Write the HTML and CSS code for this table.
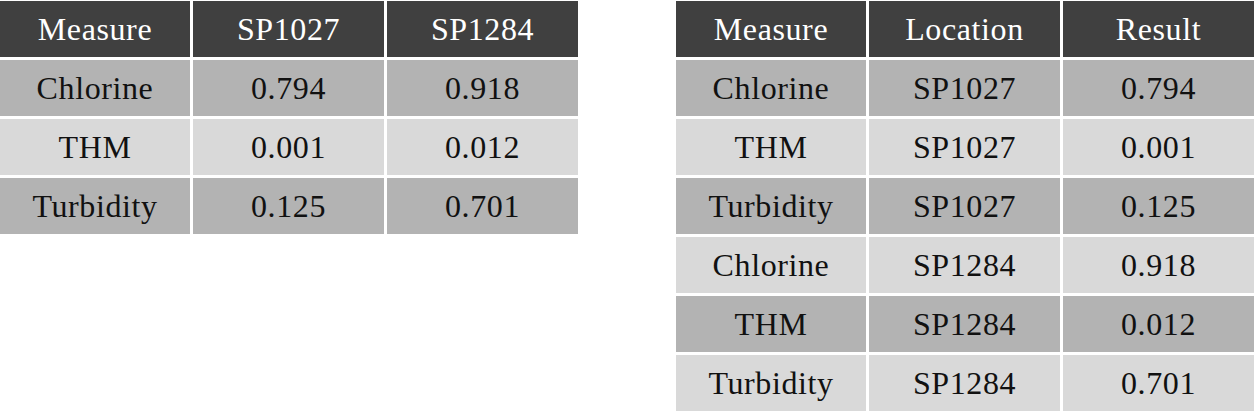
FILE: index.html
```html
<!DOCTYPE html>
<html>
<head>
<meta charset="utf-8">
<link rel="stylesheet" href="styles.css">
</head>
<body>
<div class="page">
  <div class="table" role="table">
    <div class="cell head">Measure</div>
    <div class="cell head">SP1027</div>
    <div class="cell head">SP1284</div>

    <div class="cell dark">Chlorine</div>
    <div class="cell dark">0.794</div>
    <div class="cell dark">0.918</div>

    <div class="cell light">THM</div>
    <div class="cell light">0.001</div>
    <div class="cell light">0.012</div>

    <div class="cell dark">Turbidity</div>
    <div class="cell dark">0.125</div>
    <div class="cell dark">0.701</div>
  </div>

  <div class="table" role="table">
    <div class="cell head">Measure</div>
    <div class="cell head">Location</div>
    <div class="cell head">Result</div>

    <div class="cell dark">Chlorine</div>
    <div class="cell dark">SP1027</div>
    <div class="cell dark">0.794</div>

    <div class="cell light">THM</div>
    <div class="cell light">SP1027</div>
    <div class="cell light">0.001</div>

    <div class="cell dark">Turbidity</div>
    <div class="cell dark">SP1027</div>
    <div class="cell dark">0.125</div>

    <div class="cell light">Chlorine</div>
    <div class="cell light">SP1284</div>
    <div class="cell light">0.918</div>

    <div class="cell dark">THM</div>
    <div class="cell dark">SP1284</div>
    <div class="cell dark">0.012</div>

    <div class="cell light">Turbidity</div>
    <div class="cell light">SP1284</div>
    <div class="cell light">0.701</div>
  </div>
</div>
</body>
</html>
```

FILE: styles.css
```css
html, body {
  margin: 0;
  padding: 0;
  background: #ffffff;
}

body {
  font-family: "Liberation Serif", "Times New Roman", serif;
  font-size: 32px;
  letter-spacing: 0.6px;
  color: #111111;
}

.page {
  display: flex;
  justify-content: space-between;
  align-items: flex-start;
  padding-top: 1px;
  width: 1254px;
}

.table {
  display: grid;
  grid-template-columns: 190px 191px 191px;
  grid-auto-rows: 56px;
  gap: 3px;
}

.cell {
  display: flex;
  align-items: center;
  justify-content: center;
  line-height: 1;
  padding-bottom: 1px;
  box-sizing: border-box;
}

.head {
  background: #404040;
  color: #ffffff;
}

.dark {
  background: #b3b3b3;
}

.light {
  background: #d9d9d9;
}
```
